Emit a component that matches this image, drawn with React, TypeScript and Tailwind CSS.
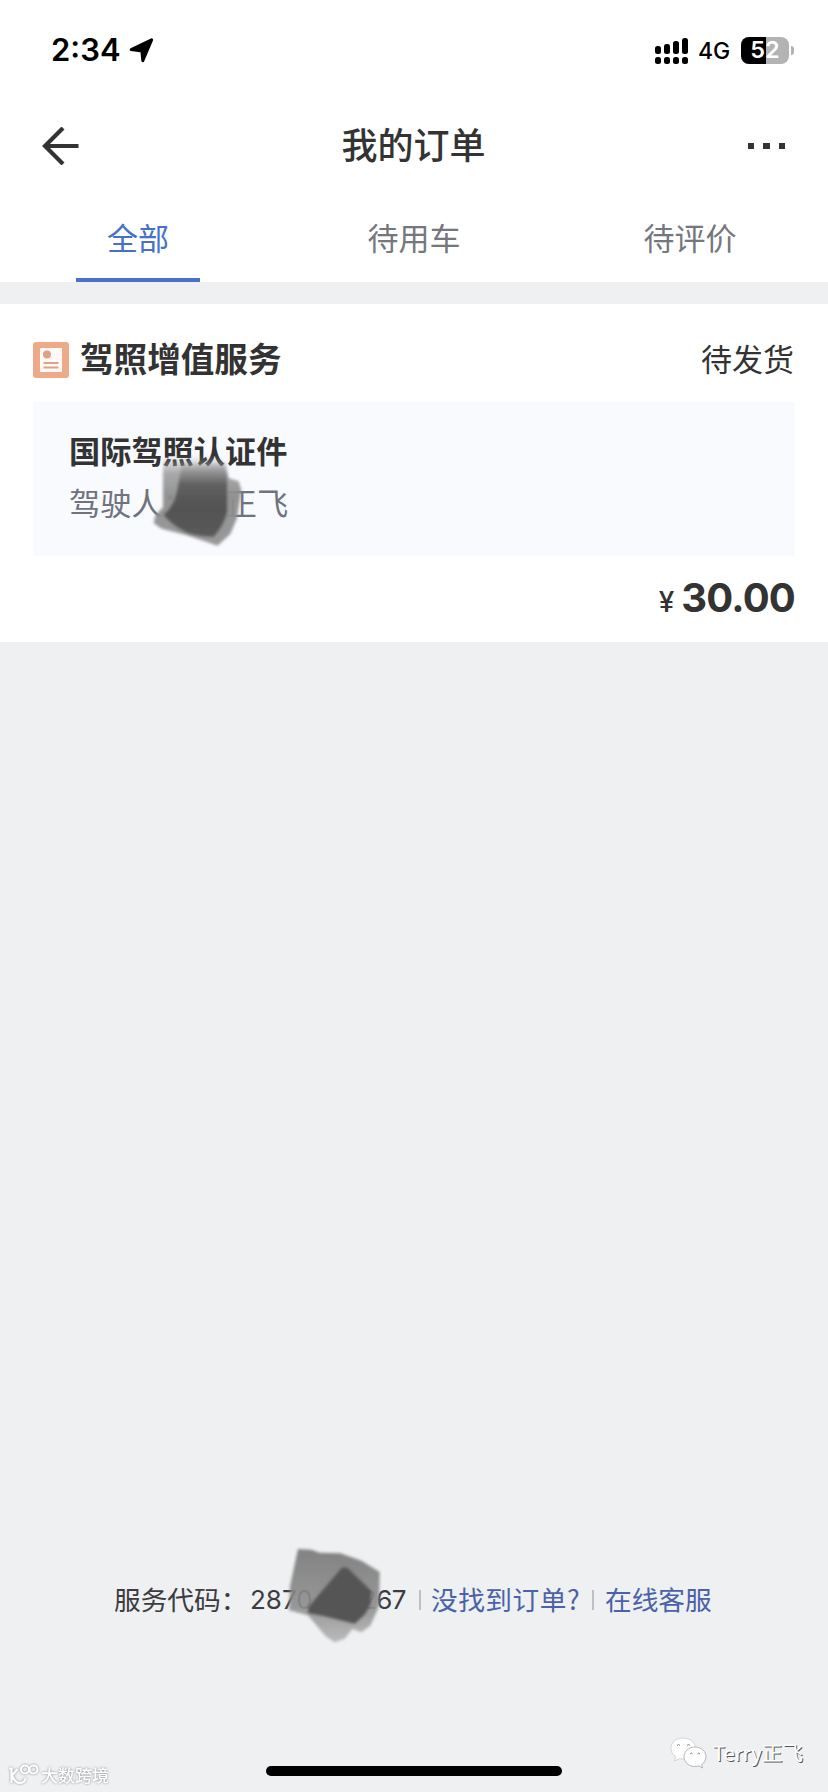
import { clsx } from "clsx";

const TABS = [
  { key: "all", label: "全部" },
  { key: "pending", label: "待用车" },
  { key: "review", label: "待评价" },
];

// Signal bar heights, weakest to strongest
const SIGNAL = [8, 10, 13, 16];

function StatusBar() {
  return (
    <div className="flex h-[100px] shrink-0 items-center justify-between pl-[51px] pr-[34px] font-['Inter'] text-black">
      <div className="flex items-center">
        <span className="mb-0.5 w-[78px] text-[31px] leading-none font-semibold">2:34</span>
        <svg width="25" height="25" viewBox="0 0 25 25">
          <path
            d="M22.6 1.8 13.8 22.6 12.9 13 2.2 11.6Z"
            fill="black"
            stroke="black"
            strokeWidth="3"
            strokeLinejoin="round"
          />
        </svg>
      </div>
      <div className="flex items-center">
        <svg width="33" height="27" viewBox="0 0 33 27">
          {SIGNAL.map((h, i) => (
            <g key={h}>
              <rect x={i * 9} y={17 - h} width="6" height={h} rx="2.5" />
              <rect x={i * 9} y="20" width="6" height="7" rx="2.5" />
            </g>
          ))}
        </svg>
        <span className="mt-0.5 ml-[10px] w-[33px] text-[23px] leading-none font-medium">4G</span>
        <div className="relative ml-[10px] flex h-[27px] w-12 items-center justify-center overflow-hidden rounded-lg bg-[#b3b3b3]">
          <div className="absolute inset-y-0 left-0 w-[25px] bg-black" />
          <span className="relative text-[23.5px] leading-none font-semibold text-white">52</span>
        </div>
        <div className="ml-0.5 h-[9px] w-[3px] rounded-r-full bg-[#b3b3b3]" />
      </div>
    </div>
  );
}

function Header() {
  return (
    <div className="flex h-[92px] shrink-0 items-center justify-between pr-[43px] pl-[42px]">
      <svg width="37" height="38" viewBox="0 0 37 38" fill="none" stroke="#333" strokeWidth="4.2">
        <path d="M36.5 19H3M21 1 3 19l18 18" />
      </svg>
      <h1 className="mb-[6px] text-[36px] leading-none font-medium text-[#333]">我的订单</h1>
      <div className="flex w-[37px] gap-[9px]">
        <i className="size-[6.5px] bg-[#333]" />
        <i className="size-[6.5px] bg-[#333]" />
        <i className="size-[6.5px] bg-[#333]" />
      </div>
    </div>
  );
}

function Tabs({ active }: { active: string }) {
  return (
    <div className="grid h-[90px] shrink-0 grid-cols-3">
      {TABS.map((tab) => (
        <div
          key={tab.key}
          className={clsx(
            "flex flex-col items-center justify-between pt-[29px] text-[31px] leading-none",
            tab.key === active ? "text-[#4570cc]" : "text-[#74777e]",
          )}
        >
          {tab.label}
          {tab.key === active && <div className="h-1 w-[124px] bg-[#4a70c8]" />}
        </div>
      ))}
    </div>
  );
}

function LicenseIcon() {
  return (
    <svg width="36" height="36" viewBox="0 0 36 36">
      <rect width="36" height="36" rx="3" fill="#eda988" />
      <rect x="7" y="6" width="22" height="24" rx="1" fill="#fffaf7" />
      <circle cx="14" cy="12.5" r="4" fill="#e0a184" />
      <path d="M10.5 21h15M10.5 25.5h15" stroke="#e0a184" strokeWidth="2" />
    </svg>
  );
}

// Marker strokes over the driver's name
function NameSmudge() {
  return (
    <svg className="absolute top-12 left-[114px]" width="100" height="100" viewBox="440 180 300 300">
      <defs>
        <linearGradient id="nameFade" x1="0" y1="0" x2="0" y2="1">
          <stop offset="0" stopColor="#999" stopOpacity="0" />
          <stop offset="0.2" stopColor="#959595" stopOpacity="0.8" />
          <stop offset="0.45" stopColor="#8c8c8c" stopOpacity="0.95" />
          <stop offset="1" stopColor="#909090" stopOpacity="0.92" />
        </linearGradient>
        <linearGradient id="nameCore" x1="0" y1="0" x2="0" y2="1">
          <stop offset="0" stopColor="#888" stopOpacity="0.2" />
          <stop offset="0.28" stopColor="#606060" />
          <stop offset="0.6" stopColor="#525252" />
          <stop offset="1" stopColor="#5a5a5a" />
        </linearGradient>
        <filter id="nameSoft">
          <feGaussianBlur stdDeviation="5" />
        </filter>
      </defs>
      <path
        filter="url(#nameSoft)"
        fill="url(#nameFade)"
        d="M488 205 540 195 645 195 678 222 684 264 715 274 723 300 710 385 690 432 652 467 560 436 484 416 460 400 465 376 488 352Z"
      />
      <path
        filter="url(#nameSoft)"
        fill="url(#nameCore)"
        d="M545 222 670 222 680 260 680 365Q672 405 640 440Q600 440 560 428Q520 410 490 375Q525 345 532 295Z"
      />
    </svg>
  );
}

// Marker strokes over the middle of the service code
function CodeSmudge() {
  return (
    <svg className="absolute top-[-42px] left-[169px]" width="100" height="107" viewBox="580 70 300 321">
      <defs>
        <linearGradient id="codeFade" x1="0" y1="0" x2="0" y2="1">
          <stop offset="0" stopColor="#7c7c7c" stopOpacity="0.95" />
          <stop offset="0.6" stopColor="#8c8c8c" stopOpacity="0.9" />
          <stop offset="1" stopColor="#b0b0b0" stopOpacity="0.85" />
        </linearGradient>
        <filter id="codeSoft">
          <feGaussianBlur stdDeviation="4" />
        </filter>
      </defs>
      <path
        filter="url(#codeSoft)"
        fill="url(#codeFade)"
        d="M625 88 665 90 690 99 752 101 815 123 870 157 868 260 842 318 815 338 788 328 765 357 735 368 708 350 655 287 598 272 601 200Z"
      />
      <path
        filter="url(#codeSoft)"
        fill="#555"
        d="M755 146Q768 138 778 149L845 214 842 255 825 285 795 312 705 290 655 280 656 262Z"
      />
    </svg>
  );
}

function OrderCard() {
  return (
    <section className="h-[338px] shrink-0 bg-white pt-[38px] pr-[33px] pl-[33px]">
      <div className="flex h-9 items-center">
        <LicenseIcon />
        <h2 className="mb-1 ml-[11px] text-[33.6px] leading-none font-bold text-[#333]">驾照增值服务</h2>
        <span className="mr-px mb-[5px] ml-auto text-[31px] leading-none text-[#333]">待发货</span>
      </div>
      <div className="relative mt-6 h-[154px] bg-[#f8fafe] pt-8 pl-9">
        <p className="text-[31.2px] leading-8 font-bold text-[#333]">国际驾照认证件</p>
        <p className="mt-5 flex text-[31.2px] leading-8 text-[#70737d]">
          <span>驾驶人：</span>
          <span className="ml-8">正飞</span>
        </p>
        <NameSmudge />
      </div>
      <div className="mt-[22px] flex items-baseline justify-end font-['Inter'] leading-none text-[#333]">
        <span className="mr-[7px] text-[28px] leading-none font-medium">¥</span>
        <span className="text-[40px] leading-none font-bold tracking-[-0.8px]">30.00</span>
      </div>
    </section>
  );
}

function ServiceFooter() {
  return (
    <div className="relative ml-[114px] flex h-7 items-center text-[26.7px] leading-7 text-[#3c3c3f]">
      <span className="w-[136px] whitespace-nowrap">服务代码：</span>
      <span className="mt-0.5 w-[113px] font-['Inter'] text-[26px]">2870</span>
      <span className="mt-0.5 flex w-[43px] justify-end font-['Inter'] text-[26px] tracking-[-0.5px]">
        267
      </span>
      <i className="mt-0.5 ml-[13px] h-5 w-[2px] bg-[#bfc0c3]" />
      <span className="ml-[10px] w-[150px] text-[26.7px] tracking-[0.5px] whitespace-nowrap text-[#4a62a8]">
        没找到订单?
      </span>
      <i className="mt-0.5 ml-[11px] h-5 w-[2px] bg-[#bfc0c3]" />
      <span className="ml-[11px] whitespace-nowrap text-[#4a62a8]">在线客服</span>
      <CodeSmudge />
    </div>
  );
}

function SiteMark() {
  return (
    <div className="flex items-center [filter:drop-shadow(0_0_1px_#888)]">
      <svg width="31" height="21" viewBox="0 0 31 21" fill="none" stroke="#fff" strokeWidth="2.2">
        <path d="M1 4.500h2.500V19M9.500 5 4 11.500Q7 19 12 19q5.500-.5 5.500-5" />
        <circle cx="17" cy="5.500" r="4" />
        <circle cx="25.500" cy="5.500" r="4" />
      </svg>
      <span className="ml-[2px] text-[17px] leading-none font-medium text-white">大数跨境</span>
    </div>
  );
}

function AuthorMark() {
  return (
    <div className="flex items-center">
      <svg width="37" height="32" viewBox="0 0 37 32" fill="#fff" stroke="#a5a5a5" strokeWidth="0.8">
        <path d="M13 1C6 1 1 5.600 1 11.500c0 3.400 1.700 6.200 4.500 8.200L4.500 24l5-2.400c8 2 16-2.500 16-10.100C25.500 5.600 20 1 13 1Z" stroke="#ccc" />
        <path d="M25 10c-6.200 0-11 4.300-11 9.700S18.800 29.500 25 29.500c1.400 0 2.600-.2 3.800-.6L32.500 31l-.9-3.500c2.700-1.800 4.400-4.600 4.400-7.800C36 14.300 31.200 10 25 10Z" />
        <path d="M7 8.500q1.500-2 3 0M17 8.500q1.500-2 3 0M20 17q1.300-2 2.600 0M27.500 17q1.300-2 2.600 0" fill="none" stroke="#666" />
      </svg>
      <span className="mb-0.5 ml-[6px] text-[20.500px] leading-none text-white [text-shadow:1px_1px_0_#555]">
        Terry正飞
      </span>
    </div>
  );
}

export default function App() {
  return (
    <div className="flex h-[1792px] w-[828px] flex-col overflow-hidden bg-[#eef0f2] font-['Noto_Sans_CJK_SC',sans-serif]">
      <div className="shrink-0 bg-white">
        <StatusBar />
        <Header />
        <Tabs active="all" />
      </div>
      <div className="h-[22px] shrink-0" />
      <OrderCard />
      <div className="mt-auto mb-[122px]">
        <ServiceFooter />
      </div>
      <div className="flex h-[57px] shrink-0 items-start pr-[25px] pl-2">
        <div className="mt-[29px] w-[105px]">
          <SiteMark />
        </div>
        <div className="mt-[31px] ml-[153px] h-[10px] w-[296px] rounded-full bg-black" />
        <div className="mt-0.5 ml-auto">
          <AuthorMark />
        </div>
      </div>
    </div>
  );
}
